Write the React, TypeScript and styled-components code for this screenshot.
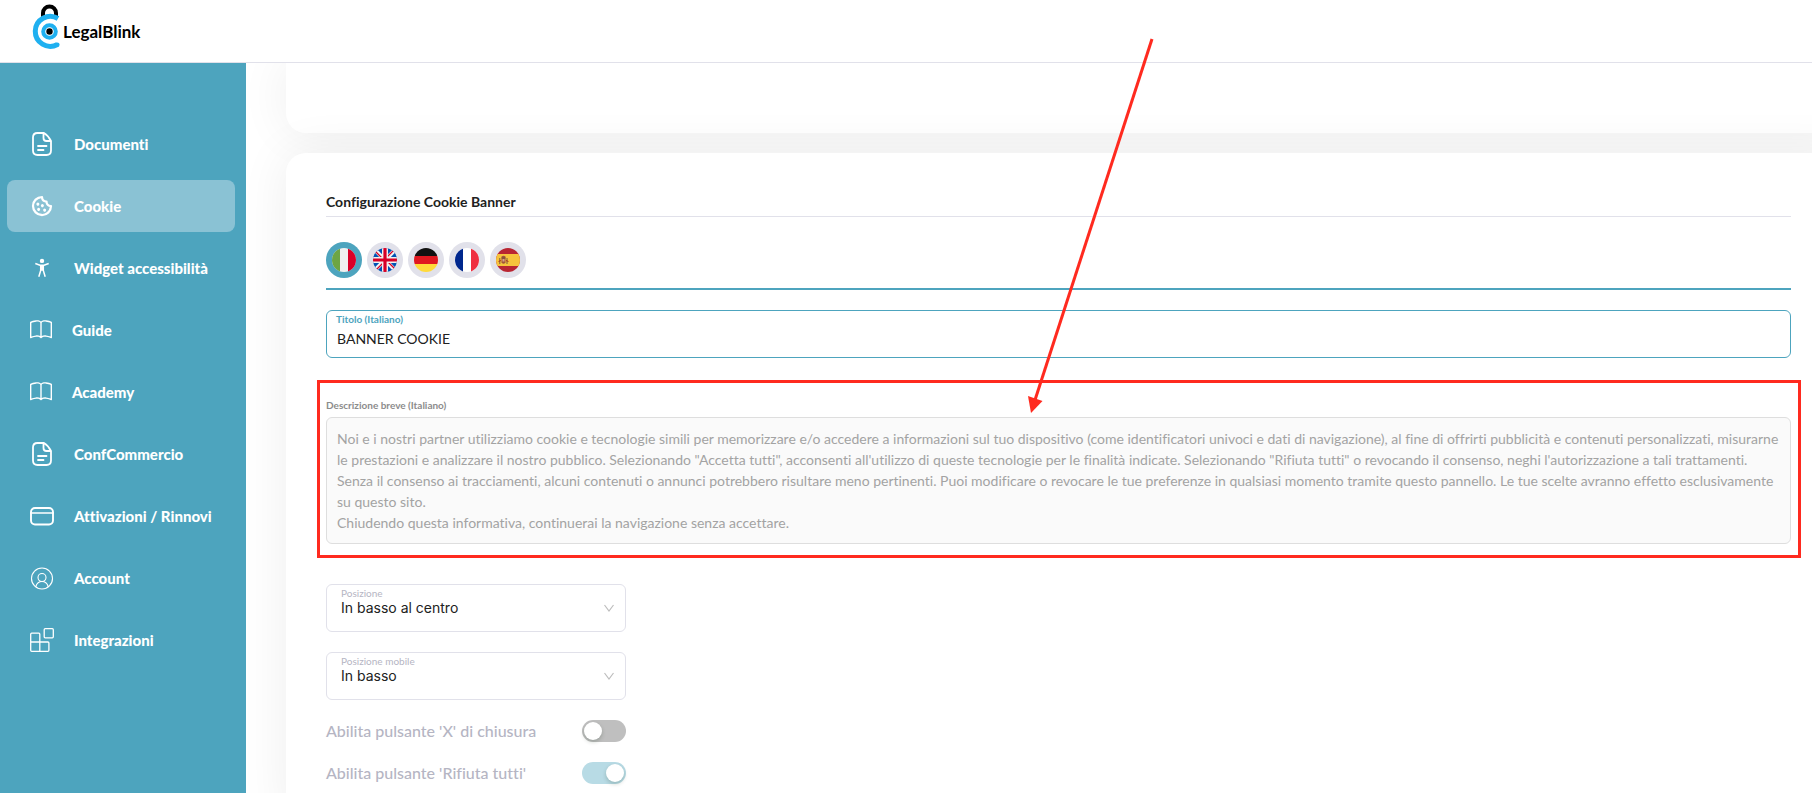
import React from "react";
import styled, { createGlobalStyle } from "styled-components";
import { BsBook } from "react-icons/bs";
import { PiCookieBold } from "react-icons/pi";

const teal = "#4da4be";
const line = "#e1e1ea";
const red = "#ff2a1f";

const GlobalStyle = createGlobalStyle`
  *, *::before, *::after { box-sizing: border-box; }
  body {
    margin: 0; background: #fff; color: #212121;
    font-family: Lato, "Open Sans", sans-serif; font-size: 14px;
    font-variant-ligatures: none;
  }
  button, input, select, textarea { font: inherit; color: inherit; font-variant-ligatures: none; }
`;

const Shell = styled.div`
  position: relative;
  display: flex;
  flex-direction: column;
  height: 100vh;
  overflow: hidden;
`;

const Header = styled.header`
  flex: none;
  display: flex;
  align-items: center;
  height: 63px;
  padding: 0 32px;
  border-bottom: 1px solid ${line};
  background: #fff;
`;

const Brand = styled.a`
  display: flex;
  align-items: center;
  color: #000;
  font-size: 17px;
  font-weight: 700;
  text-decoration: none;
`;

const Body = styled.div`
  flex: 1;
  display: flex;
  min-height: 0;
`;

const Sidebar = styled.nav`
  flex: none;
  display: flex;
  flex-direction: column;
  gap: 10px;
  width: 246px;
  padding: 55px 11px 0 7px;
  background: ${teal};
`;

const NavItem = styled.a<{ $active?: boolean }>`
  display: flex;
  align-items: center;
  gap: 20px;
  height: 52px;
  padding: 0 23px;
  border-radius: 8px;
  background: ${(p) => (p.$active ? "#8ac2d4" : "transparent")};
  color: #fff;
  font-size: 15px;
  font-weight: 900;
  line-height: 20px;
  text-decoration: none;
  white-space: nowrap;
  svg { flex: none; }
`;

const Main = styled.main`
  flex: 1;
  min-width: 0;
  display: flex;
  flex-direction: column;
  gap: 20px;
  padding-left: 40px;
  overflow: hidden;
`;

const Card = styled.section<{ $tail?: boolean }>`
  flex: ${(p) => (p.$tail ? "none" : "1 0 auto")};
  min-height: ${(p) => (p.$tail ? "70px" : "0")};
  margin-right: -40px;
  padding: ${(p) => (p.$tail ? "0" : "40px 61px 40px 40px")};
  border-radius: ${(p) => (p.$tail ? "0 0 20px 20px" : "20px")};
  background: #fff;
  box-shadow: 0 0 50px rgba(0, 0, 0, 0.07);
`;

const Title = styled.h2`
  margin: 0;
  padding-bottom: 5px;
  border-bottom: 1px solid ${line};
  font-size: 14px;
  font-weight: 700;
  line-height: 18px;
`;

const Languages = styled.div`
  display: flex;
  gap: 5px;
  padding: 25px 0 10px;
  border-bottom: 2px solid ${teal};
`;

const FlagButton = styled.button<{ $active?: boolean }>`
  display: flex;
  align-items: center;
  justify-content: center;
  width: 36px;
  height: 36px;
  padding: 0;
  border: 0;
  border-radius: 50%;
  background: ${(p) => (p.$active ? teal : line)};
  svg { border-radius: 50%; }
`;

const TextField = styled.div`
  display: flex;
  flex-direction: column;
  gap: 2px;
  height: 48px;
  margin-top: 20px;
  padding: 1px 9px;
  border: 1px solid ${teal};
  border-radius: 6px;
  label { color: ${teal}; font-size: 10px; font-weight: 700; line-height: 14px; }
  input { height: 22px; padding: 0 1px; border: 0; outline: 0; background: transparent; line-height: 22px; }
`;

const Highlight = styled.div`
  display: flex;
  flex-direction: column;
  margin: 22px -10px 26px -9px;
  padding: 15px 7px 11px 6px;
  border: 3px solid ${red};
  label { color: #8c8c8c; font-size: 10px; font-weight: 700; line-height: 14px; }
`;

const Description = styled.textarea`
  display: block;
  width: 100%;
  height: 127px;
  margin-top: 5px;
  padding: 10px;
  border: 1px solid #dedede;
  border-radius: 6px;
  outline: 0;
  background: #fafafa;
  color: #a3a3a3;
  line-height: 21px;
  overflow: hidden;
  resize: none;
`;

const Options = styled.div`
  display: flex;
  flex-direction: column;
  gap: 20px;
  width: 300px;
`;

const SelectField = styled.div`
  position: relative;
  display: flex;
  flex-direction: column;
  height: 48px;
  padding: 1px 14px;
  border: 1px solid ${line};
  border-radius: 6px;
  label { color: #b5b5c3; font-size: 10px; line-height: 14px; }
  select {
    height: 16px; padding: 0; border: 0; outline: 0; appearance: none;
    background: transparent; color: #212121; font-family: Inter, sans-serif; line-height: 16px;
  }
  svg { position: absolute; top: 18px; right: 11px; pointer-events: none; }
`;

const ToggleRow = styled.label`
  display: flex;
  justify-content: space-between;
  height: 22px;
  color: #b5b5c3;
  font-size: 16px;
  font-weight: 500;
  line-height: 22px;
`;

const Switch = styled.input`
  appearance: none;
  display: flex;
  width: 44px;
  height: 22px;
  margin: 0;
  padding: 2px;
  border-radius: 11px;
  background: #bfbfbf;
  &::before {
    content: "";
    width: 18px;
    height: 18px;
    border-radius: 50%;
    background: #fff;
    box-shadow: 0 2px 4px rgba(0, 35, 11, 0.2);
  }
  &:checked { justify-content: flex-end; background: #b8dbe5; }
`;

const Pointer = styled.svg`
  position: absolute;
  top: 36px;
  left: 1026px;
  pointer-events: none;
`;

const Logo = () => (
  <svg width="31" height="54" viewBox="0 0 31 54" fill="none" aria-hidden="true">
    <path d="M11 14V9a6.500 6.500 0 0 1 13 0v5" stroke="#000" strokeWidth="4" />
    <path d="M26 14.500A15 15 0 1 0 25.500 40.500" stroke="#1fb0f0" strokeWidth="5" />
    <circle cx="25.300" cy="40.700" r="2.300" fill="#1fb0f0" />
    <circle cx="17.500" cy="27.500" r="6.300" stroke="#1fb0f0" strokeWidth="4" />
    <circle cx="17.500" cy="27.500" r="3.200" fill="#000" />
  </svg>
);

const stroke = { fill: "none", stroke: "#fff", strokeLinecap: "round", strokeLinejoin: "round" } as const;

const DocumentIcon = () => (
  <svg width="24" height="24" viewBox="0 0 24 24" {...stroke} strokeWidth="1.800">
    <path d="M14 1H7.500C4.500 1 3 2.500 3 5.500v13C3 21.500 4.500 23 7.500 23h9c3 0 4.500-1.500 4.500-4.500V9C19.500 6 16.500 2.500 14 1zM13.500 1.500V6c0 2 1 3 3 3H21M8 14h8.500M8 18h5.500" />
  </svg>
);

const PersonIcon = () => (
  <svg width="24" height="24" viewBox="0 0 24 24" fill="none" stroke="#fff">
    <circle cx="12" cy="4.900" r="2.200" fill="#fff" stroke="none" />
    <path d="M5.300 7.500 10 9.200h4l4.700-1.700M10.700 9.500v5L8.800 20.700M13.300 9.500v5l1.900 6.200M10.500 14h3" strokeWidth="1.500" />
    <path d="M12 9v5" strokeWidth="2" />
  </svg>
);

const CardIcon = () => (
  <svg width="24" height="24" viewBox="0 0 24 24" {...stroke}>
    <rect x="1" y="4" width="22" height="16.500" rx="4" strokeWidth="1.900" />
    <path d="M1 9h22" strokeWidth="1.700" />
  </svg>
);

const AccountIcon = () => (
  <svg width="24" height="24" viewBox="0 0 24 24" {...stroke} strokeWidth="1.100">
    <circle cx="12" cy="12.500" r="10.500" />
    <circle cx="12" cy="11.500" r="4" />
    <path d="M5.800 20.500c1-3.200 3.400-5 6.200-5s5.200 1.800 6.200 5" />
  </svg>
);

const BlocksIcon = () => (
  <svg width="24" height="24" viewBox="0 0 24 24" {...stroke} strokeWidth="1.300">
    <rect x="14.200" y=".7" width="9.100" height="9.100" rx="1" />
    <path d="M9.800 14V6.200a1 1 0 0 0-1-1H1.700a1 1 0 0 0-1 1v16.100a1 1 0 0 0 1 1h16.200a1 1 0 0 0 1-1V15a1 1 0 0 0-1-1H.7M9.800 14v9.300" />
  </svg>
);

const Chevron = () => (
  <svg width="10" height="10" viewBox="0 0 10 10" fill="none" stroke="#bdbdbd">
    <path d="M.5 2 5 8l4.500-6" strokeWidth="1.200" />
  </svg>
);

const flagProps = { width: 24, height: 24, viewBox: "0 0 24 24", "aria-hidden": true } as const;

const Italy = () => (
  <svg {...flagProps}>
    <path fill="#f0f0f0" d="M0 0h24v24H0z" />
    <path fill="#6da544" d="M0 0h8v24H0z" />
    <path fill="#d80027" d="M16 0h8v24h-8z" />
  </svg>
);
const Britain = () => (
  <svg {...flagProps}>
    <path fill="#0052b4" d="M0 0h24v24H0z" />
    <path stroke="#f0f0f0" strokeWidth="4" d="m0 0 24 24M24 0 0 24" />
    <path stroke="#d80027" strokeWidth="1.300" d="m0 1 11 11M13 12l11 11M23 0 12 11M12 13 1 24" />
    <path stroke="#f0f0f0" strokeWidth="6" d="M12 0v24M0 12h24" />
    <path stroke="#d80027" strokeWidth="3.200" d="M12 0v24M0 12h24" />
  </svg>
);
const Germany = () => (
  <svg {...flagProps}>
    <path fill="#111" d="M0 0h24v8H0z" />
    <path fill="#e01820" d="M0 8h24v8H0z" />
    <path fill="#ffda3a" d="M0 16h24v8H0z" />
  </svg>
);
const France = () => (
  <svg {...flagProps}>
    <path fill="#fff" d="M0 0h24v24H0z" />
    <path fill="#00278e" d="M0 0h8v24H0z" />
    <path fill="#ef2f40" d="M16 0h8v24h-8z" />
  </svg>
);
const Spain = () => (
  <svg {...flagProps}>
    <path fill="#b92532" d="M0 0h24v24H0z" />
    <path fill="#f6c33c" d="M0 6h24v12H0z" />
    <path fill="#a2543b" d="M5.500 8.500Q7.500 6.800 9.500 8.500v6q-2 2.500-4 0z" />
    <path fill="#d9a08a" d="M6.500 11h2v2.500h-2z" />
    <path stroke="#6b5140" strokeWidth=".9" d="M3.800 10v6M11 10v6M5.500 10h4" />
    <path stroke="#ad1519" strokeWidth=".8" d="M2.500 13.500 5 12.500M10 12.500l2.500 1" />
  </svg>
);

const navItems = [
  { label: "Documenti", icon: <DocumentIcon /> },
  { label: "Cookie", icon: <PiCookieBold size={24} />, active: true },
  { label: "Widget accessibilità", icon: <PersonIcon /> },
  { label: "Guide", icon: <BsBook size={22} /> },
  { label: "Academy", icon: <BsBook size={22} /> },
  { label: "ConfCommercio", icon: <DocumentIcon /> },
  { label: "Attivazioni / Rinnovi", icon: <CardIcon /> },
  { label: "Account", icon: <AccountIcon /> },
  { label: "Integrazioni", icon: <BlocksIcon /> },
];

const languages = [
  { name: "Italiano", flag: <Italy /> },
  { name: "English", flag: <Britain /> },
  { name: "Deutsch", flag: <Germany /> },
  { name: "Français", flag: <France /> },
  { name: "Español", flag: <Spain /> },
];

const description = `Noi e i nostri partner utilizziamo cookie e tecnologie simili per memorizzare e/o accedere a informazioni sul tuo dispositivo (come identificatori univoci e dati di navigazione), al fine di offrirti pubblicità e contenuti personalizzati, misurarne le prestazioni e analizzare il nostro pubblico. Selezionando "Accetta tutti", acconsenti all'utilizzo di queste tecnologie per le finalità indicate. Selezionando "Rifiuta tutti" o revocando il consenso, neghi l'autorizzazione a tali trattamenti. Senza il consenso ai tracciamenti, alcuni contenuti o annunci potrebbero risultare meno pertinenti. Puoi modificare o revocare le tue preferenze in qualsiasi momento tramite questo pannello. Le tue scelte avranno effetto esclusivamente su questo sito.
Chiudendo questa informativa, continuerai la navigazione senza accettare.`;

export default function App() {
  return (
    <Shell>
      <GlobalStyle />
      <Header>
        <Brand href="#">
          <Logo />
          LegalBlink
        </Brand>
      </Header>
      <Body>
        <Sidebar>
          {navItems.map((item) => (
            <NavItem key={item.label} href="#" $active={item.active}>
              {item.icon}
              {item.label}
            </NavItem>
          ))}
        </Sidebar>
        <Main>
          <Card $tail />
          <Card>
            <Title>Configurazione Cookie Banner</Title>
            <Languages>
              {languages.map((lang, i) => (
                <FlagButton key={lang.name} type="button" aria-label={lang.name} $active={i === 0}>
                  {lang.flag}
                </FlagButton>
              ))}
            </Languages>
            <TextField>
              <label htmlFor="title">Titolo (Italiano)</label>
              <input id="title" type="text" defaultValue="BANNER COOKIE" />
            </TextField>
            <Highlight>
              <label htmlFor="description">Descrizione breve (Italiano)</label>
              <Description id="description" disabled defaultValue={description} />
            </Highlight>
            <Options>
              <SelectField>
                <label htmlFor="position">Posizione</label>
                <select id="position">
                  <option>In basso al centro</option>
                </select>
                <Chevron />
              </SelectField>
              <SelectField>
                <label htmlFor="mobile">Posizione mobile</label>
                <select id="mobile">
                  <option>In basso</option>
                </select>
                <Chevron />
              </SelectField>
              <ToggleRow>
                Abilita pulsante 'X' di chiusura
                <Switch type="checkbox" />
              </ToggleRow>
              <ToggleRow>
                Abilita pulsante 'Rifiuta tutti'
                <Switch type="checkbox" defaultChecked />
              </ToggleRow>
            </Options>
          </Card>
        </Main>
      </Body>
      <Pointer width="130" height="380" viewBox="0 0 130 380" aria-hidden="true">
        <path d="M126 3 9 364" stroke={red} strokeWidth="3" />
        <path d="M2 360 16.500 365 5 377z" fill={red} />
      </Pointer>
    </Shell>
  );
}
